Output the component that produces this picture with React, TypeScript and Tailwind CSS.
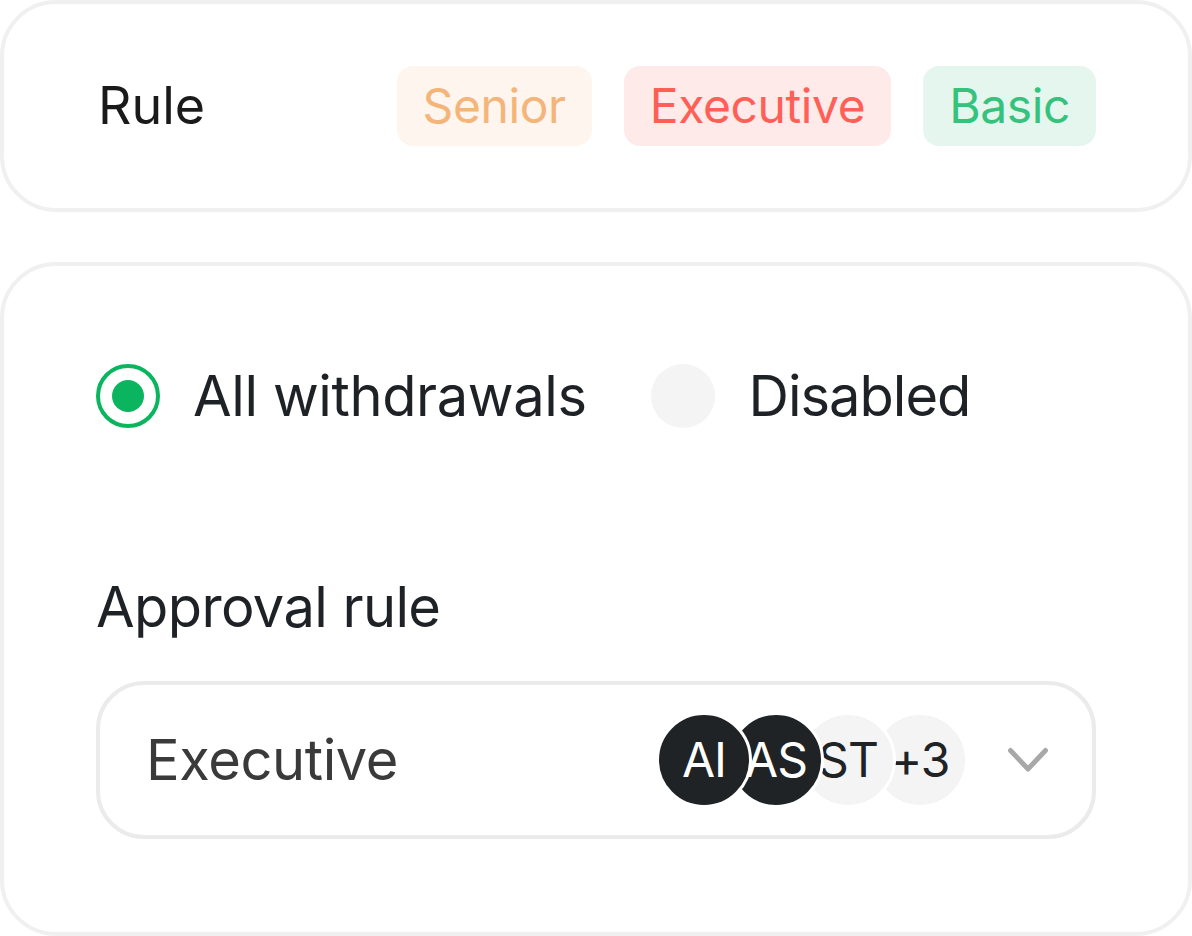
import React from "react";

const font = { fontFamily: "Inter, 'Noto Sans', sans-serif" };

function Badge({ label, cls }: { label: string; cls: string }) {
  return (
    <div className={`h-[80px] px-[26px] rounded-[16px] flex items-center text-[48px] leading-none tracking-[-0.4px] ${cls}`}>
      {label}
    </div>
  );
}

function Avatar({ label, dark, z }: { label: string; dark?: boolean; z: string }) {
  return (
    <div
      className={`relative ${z} w-[96px] h-[96px] rounded-full border-[3px] border-white flex items-center justify-center text-[48px] leading-none tracking-[-1px] -ml-[24px] first:ml-0 ${
        dark ? "bg-[#1f2326] text-white" : "bg-[#f4f4f4] text-[#1f2326]"
      }`}
    >
      {label}
    </div>
  );
}

export default function App() {
  return (
    <div className="w-[1192px] h-[936px] bg-white flex flex-col gap-[50px] text-[#1e2226]" style={font}>
      <div className="h-[212px] shrink-0 border-4 border-[#f0f0f0] rounded-[56px] flex items-center justify-between pl-[94px] pr-[92px]">
        <div className="text-[52px] leading-none text-[#1a1a1a]">Rule</div>
        <div className="flex gap-8">
          <Badge label="Senior" cls="bg-[#fdf5ee] text-[#f4b57b]" />
          <Badge label="Executive" cls="bg-[#ffeaea] text-[#ff5f57]" />
          <Badge label="Basic" cls="bg-[#e5f6ee] text-[#34c27c]" />
        </div>
      </div>

      <div className="flex-1 border-4 border-[#f0f0f0] rounded-[56px] pl-[92px] pr-[92px] pt-[98px] flex flex-col">
        <div className="flex items-center gap-[64px] h-[64px]">
          <div className="flex items-center gap-[33px]">
            <div className="w-[64px] h-[64px] rounded-full border-[4px] border-[#0bb55f] flex items-center justify-center">
              <div className="w-[32px] h-[32px] rounded-full bg-[#0bb55f]" />
            </div>
            <span className="text-[56px] leading-none tracking-[-0.4px]">All withdrawals</span>
          </div>
          <div className="flex items-center gap-[34px]">
            <div className="w-[64px] h-[64px] rounded-full bg-[#f4f4f4]" />
            <span className="text-[56px] leading-none tracking-[-1px]">Disabled</span>
          </div>
        </div>

        <div className="mt-[146px] text-[56px] leading-[67px] tracking-[-0.6px]">Approval rule</div>

        <div className="mt-[40px] h-[158px] border-4 border-[#ebebeb] rounded-[48px] flex items-center justify-between pl-[46px] pr-[44px]">
          <span className="text-[56px] leading-none tracking-[-0.4px] text-[#3a3a3a]">Executive</span>
          <div className="flex items-center gap-[40px]">
            <div className="flex items-center">
              <Avatar label="AI" dark z="z-40" />
              <Avatar label="AS" dark z="z-30" />
              <Avatar label="ST" z="z-20" />
              <Avatar label="+3" z="z-10" />
            </div>
            <svg width="40" height="24" viewBox="0 0 40 24" fill="none" className="overflow-visible">
              <path d="M2.5 2.5 L20 21 L37.5 2.5" stroke="#a8a8a8" strokeWidth="5" strokeLinecap="round" strokeLinejoin="round" />
            </svg>
          </div>
        </div>
      </div>
    </div>
  );
}
